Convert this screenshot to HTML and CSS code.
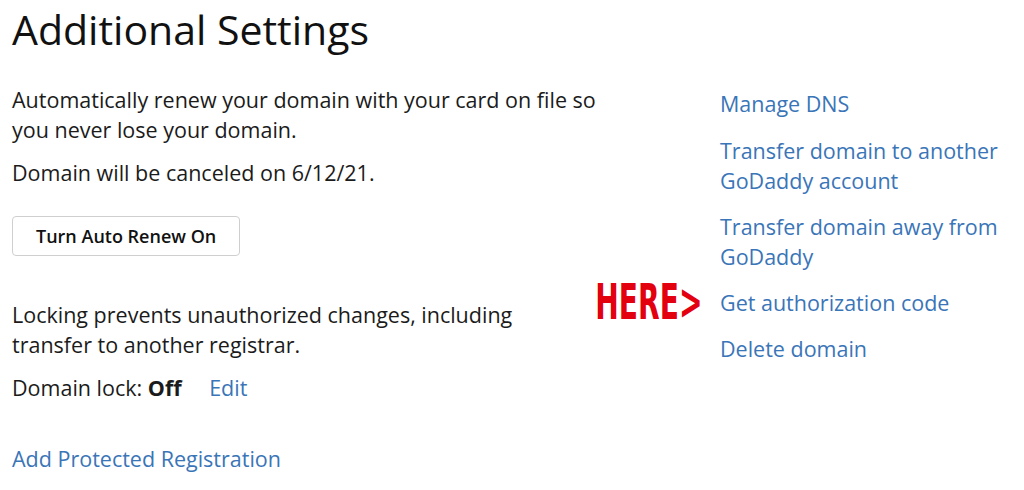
FILE: index.html
```html
<!DOCTYPE html>
<html lang="en">
<head>
    <meta charset="UTF-8">
    <meta name="viewport" content="width=device-width, initial-scale=1.0">
    <title>Additional Settings</title>
    <link rel="stylesheet" href="styles.css">
</head>
<body>
    <div id="settings">
        <h1>Additional Settings</h1>

        <div class="settings-grid">
            <div class="settings-main">
                <p class="desc">Automatically renew your domain with your card on file so you never lose your domain.</p>
                <p class="status">Domain will be canceled on 6/12/21.</p>
                <button class="btn">Turn Auto Renew On</button>

                <p class="desc lock-desc">Locking prevents unauthorized changes, including transfer to another registrar.</p>
                <p class="status">Domain lock: <strong>Off</strong> <a href="#" class="link edit">Edit</a></p>

                <a href="#" class="link protected">Add Protected Registration</a>
            </div>

            <ul class="settings-links">
                <li><a href="#" class="link">Manage DNS</a></li>
                <li><a href="#" class="link">Transfer domain to another GoDaddy account</a></li>
                <li><a href="#" class="link">Transfer domain away from GoDaddy</a></li>
                <li class="marked">
                    <span class="marker">HERE&gt;</span>
                    <a href="#" class="link">Get authorization code</a>
                </li>
                <li><a href="#" class="link">Delete domain</a></li>
            </ul>
        </div>
    </div>
</body>
</html>
```

FILE: styles.css
```css
body {
    margin: 0;
    padding: 0;
    background-color: #fff;
    font-family: 'Open Sans', 'Noto Sans', sans-serif;
    color: #1b1b1b;
}

#settings {
    padding: 0 12px;
}

h1 {
    margin: 0;
    padding-top: 4px;
    font-size: 41px;
    font-weight: 400;
    line-height: 50px;
    color: #111;
}

.settings-grid {
    display: grid;
    grid-template-columns: 708px 1fr;
    margin-top: 31px;
}

.settings-main {
    max-width: 592px;
}

p {
    margin: 0;
    font-size: 21.5px;
    line-height: 30px;
}

.status {
    margin-top: 13px;
}

.lock-desc {
    margin-top: 44px;
    max-width: 560px;
}

.btn {
    display: block;
    margin-top: 28px;
    height: 40px;
    padding: 0 23px;
    background: #fff;
    border: 1px solid #cfcfcf;
    border-radius: 4px;
    font-family: inherit;
    font-size: 18px;
    font-weight: 600;
    color: #111;
}

strong {
    font-weight: 700;
}

.link {
    color: #3a75b8;
    text-decoration: none;
    font-size: 21.5px;
    line-height: 30px;
}

.edit {
    margin-left: 22px;
}

.protected {
    display: block;
    margin-top: 41px;
}

.settings-links {
    list-style: none;
    margin: 4px 0 0;
    padding: 0;
}

.settings-links li {
    margin-bottom: 16px;
    font-size: 21.5px;
    line-height: 30px;
}

.settings-links li:first-child {
    margin-bottom: 17px;
}

.marked {
    position: relative;
}

.marker {
    position: absolute;
    right: calc(100% + 18px);
    top: -6px;
    font-family: 'DejaVu Sans Condensed', 'DejaVu Sans', sans-serif;
    font-size: 50px;
    font-weight: 700;
    line-height: 40px;
    color: #e3000f;
    white-space: nowrap;
    transform: scaleX(0.625);
    transform-origin: right center;
}
```
